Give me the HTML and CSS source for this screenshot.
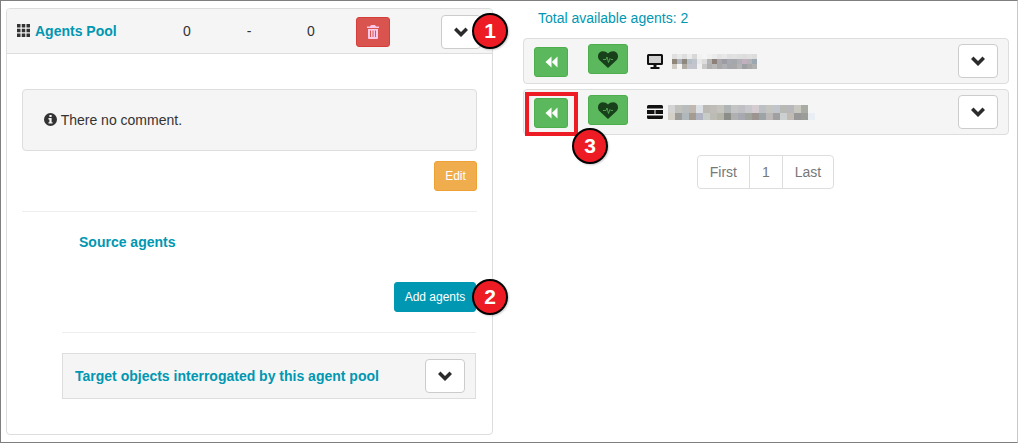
FILE: index.html
```html
<!DOCTYPE html>
<html lang="en">
<head>
    <meta charset="UTF-8">
    <title>Agents Pool</title>
    <link rel="stylesheet" href="styles.css">
</head>
<body>
    <svg class="sprites" width="0" height="0">
        <symbol id="chevron" viewBox="0 0 14 10"><path d="M0 3 2.500.5 7 5l4.500-4.500L14 3 7 10z"/></symbol>
        <symbol id="rewind" viewBox="0 0 13 12"><path d="M6.500 .5v11L.5 6zM12.500 .5v11L6.800 6z"/></symbol>
        <symbol id="heart" viewBox="0 0 20 17">
            <path d="M10 17 1.600 9.200C-.7 7-.4 3.200 1.600 1.400 3.800-.5 7.500-.2 10 2.600 12.500-.2 16.200-.5 18.400 1.400c2 1.800 2.300 5.600 0 7.800z"/>
            <polyline class="pulse" points="5,8.500 8,8.500 9,6 10.500,11.500 12,7.500 13,8.500 15,8.500"/>
        </symbol>
    </svg>

    <div class="frame">
        <div class="left">
            <div class="panel">
                <div class="panel-head">
                    <svg class="grid-icon" width="13" height="13" viewBox="0 0 13 13">
                        <path d="M0 0h3.500v3.500H0zM4.750 0h3.500v3.500h-3.500zM9.500 0H13v3.500H9.500zM0 4.750h3.500v3.500H0zM4.750 4.750h3.500v3.500h-3.500zM9.500 4.750H13v3.500H9.500zM0 9.500h3.500V13H0zM4.750 9.500h3.500V13h-3.500zM9.500 9.500H13V13H9.500z"/>
                    </svg>
                    <span class="title">Agents Pool</span>
                    <span class="num num-a">0</span>
                    <span class="num num-b">-</span>
                    <span class="num num-c">0</span>
                    <button class="btn btn-danger">
                        <svg width="12" height="14" viewBox="0 0 12 14"><path fill-rule="evenodd" d="M4 0h4l1 1.500h3V3H0V1.500h3zM1 4h10v9a1 1 0 0 1-1 1H2a1 1 0 0 1-1-1zM3 5.500V12h1V5.500zM5.500 5.500V12h1V5.500zM8 5.500V12h1V5.500z"/></svg>
                    </button>
                    <button class="btn btn-toggle toggle-head"><svg class="chev"><use href="#chevron"/></svg></button>
                </div>
                <div class="panel-body">
                    <div class="well"><svg class="info" width="13" height="13" viewBox="0 0 14 14"><path fill-rule="evenodd" d="M7 0a7 7 0 1 1 0 14A7 7 0 0 1 7 0zM5.800 2.200v2.200h2.400V2.200zM4.800 5.500v1.400h1v3h-1v1.500h4.400V9.900h-1V5.500z"/></svg> There no comment.</div>
                    <div class="row-end"><button class="btn btn-warning">Edit</button></div>
                    <hr class="rule">
                    <div class="indent">
                        <h4 class="source-title">Source agents</h4>
                        <div class="row-end add-row"><button class="btn btn-info">Add agents</button></div>
                        <hr class="rule rule-two">
                        <div class="target">
                            <span class="target-title">Target objects interrogated by this agent pool</span>
                            <button class="btn btn-toggle"><svg class="chev"><use href="#chevron"/></svg></button>
                        </div>
                    </div>
                </div>
            </div>
        </div>

        <div class="right">
            <div class="total">Total available agents: 2</div>

            <div class="agent">
                <button class="btn btn-success btn-back"><svg width="13" height="12"><use href="#rewind"/></svg></button>
                <button class="btn btn-success btn-health"><svg width="20" height="17"><use href="#heart"/></svg></button>
                <svg class="kind" width="16" height="15" viewBox="0 0 16 15">
                    <path class="screen" d="M1 1h14v9H1z"/>
                    <path fill-rule="evenodd" d="M1.500 0h13A1.500 1.500 0 0 1 16 1.500v8a1.500 1.500 0 0 1-1.500 1.500H9.500v2h3v2h-9v-2h3v-2h-5A1.500 1.500 0 0 1 0 9.500v-8A1.500 1.500 0 0 1 1.500 0zM2 2v7h12V2z"/>
                </svg>
                <!-- blurred host name -->
                <svg class="blur blur-one" width="85" height="15" viewBox="0 0 17 3" shape-rendering="crispEdges">
                    <rect x="0" y="0" width="1" height="1" fill="#e0e0e0"/><rect x="1" y="0" width="1" height="1" fill="#e9e9e9"/><rect x="2" y="0" width="1" height="1" fill="#dedede"/><rect x="3" y="0" width="1" height="1" fill="#ececec"/><rect x="4" y="0" width="1" height="1" fill="#d8d8d8"/><rect x="5" y="0" width="1" height="1" fill="#f2f2f2"/><rect x="7" y="0" width="1" height="1" fill="#f0f0f0"/><rect x="8" y="0" width="1" height="1" fill="#ebebeb"/><rect x="9" y="0" width="1" height="1" fill="#e4e4e4"/><rect x="10" y="0" width="1" height="1" fill="#e8e8e8"/><rect x="11" y="0" width="1" height="1" fill="#e0e0e0"/><rect x="12" y="0" width="1" height="1" fill="#e2e2e2"/><rect x="13" y="0" width="1" height="1" fill="#e0dfe0"/><rect x="14" y="0" width="1" height="1" fill="#dddddd"/><rect x="15" y="0" width="1" height="1" fill="#e0e0e0"/><rect x="16" y="0" width="1" height="1" fill="#dcdcdc"/>
                    <rect x="0" y="1" width="1" height="1" fill="#8f8578"/><rect x="1" y="1" width="1" height="1" fill="#b0b4bc"/><rect x="2" y="1" width="1" height="1" fill="#8c8880"/><rect x="3" y="1" width="1" height="1" fill="#b8bec6"/><rect x="4" y="1" width="1" height="1" fill="#c0c4cc"/><rect x="5" y="1" width="1" height="1" fill="#e8e8e8"/><rect x="6" y="1" width="1" height="1" fill="#dcdcdc"/><rect x="7" y="1" width="1" height="1" fill="#b4b4b4"/><rect x="8" y="1" width="1" height="1" fill="#8c8078"/><rect x="9" y="1" width="1" height="1" fill="#a8a8ac"/><rect x="10" y="1" width="1" height="1" fill="#9c9ca4"/><rect x="11" y="1" width="1" height="1" fill="#a8a8b0"/><rect x="12" y="1" width="1" height="1" fill="#a4a8ac"/><rect x="13" y="1" width="1" height="1" fill="#b0b0b4"/><rect x="14" y="1" width="1" height="1" fill="#c0b0c0"/><rect x="15" y="1" width="1" height="1" fill="#b4b4b8"/><rect x="16" y="1" width="1" height="1" fill="#9ca8b0"/>
                    <rect x="0" y="2" width="1" height="1" fill="#d0ccc4"/><rect x="2" y="2" width="1" height="1" fill="#b0aca4"/><rect x="3" y="2" width="1" height="1" fill="#c4c4cc"/><rect x="4" y="2" width="1" height="1" fill="#c4c4cc"/><rect x="5" y="2" width="1" height="1" fill="#f0f0f0"/><rect x="6" y="2" width="1" height="1" fill="#c8c8c8"/><rect x="7" y="2" width="1" height="1" fill="#b0b0b0"/><rect x="8" y="2" width="1" height="1" fill="#b8b8b8"/><rect x="9" y="2" width="1" height="1" fill="#a8a8a8"/><rect x="10" y="2" width="1" height="1" fill="#b0b0b4"/><rect x="11" y="2" width="1" height="1" fill="#a4a8ac"/><rect x="12" y="2" width="1" height="1" fill="#a8a8a8"/><rect x="13" y="2" width="1" height="1" fill="#b4b4b4"/><rect x="14" y="2" width="1" height="1" fill="#9ca0a4"/><rect x="15" y="2" width="1" height="1" fill="#a8a8a8"/><rect x="16" y="2" width="1" height="1" fill="#b0b0b0"/>
                </svg>
                <button class="btn btn-toggle toggle-end"><svg class="chev"><use href="#chevron"/></svg></button>
            </div>

            <div class="agent">
                <button class="btn btn-success btn-back"><svg width="13" height="12"><use href="#rewind"/></svg></button>
                <button class="btn btn-success btn-health"><svg width="20" height="17"><use href="#heart"/></svg></button>
                <svg class="kind" width="16" height="14" viewBox="0 0 16 14">
                    <path d="M1.500 0h13A1.500 1.500 0 0 1 16 1.500V3.500H0V1.500A1.500 1.500 0 0 1 1.500 0zM0 5h7.500v4H0zM8.500 5H16v4H8.500zM0 10.500h16v2a1.500 1.500 0 0 1-1.500 1.500h-13A1.500 1.500 0 0 1 0 12.500z"/>
                </svg>
                <svg class="blur blur-two" width="147" height="15" viewBox="0 0 21 2" preserveAspectRatio="none" shape-rendering="crispEdges">
                    <rect x="0" y="0" width="1" height="1" fill="#d4d4d4"/><rect x="1" y="0" width="1" height="1" fill="#c0c0bc"/><rect x="2" y="0" width="1" height="1" fill="#b8bcbc"/><rect x="3" y="0" width="1" height="1" fill="#c0b8b0"/><rect x="4" y="0" width="1" height="1" fill="#dce0e4"/><rect x="5" y="0" width="1" height="1" fill="#bcb8b4"/><rect x="6" y="0" width="1" height="1" fill="#c0bcb8"/><rect x="7" y="0" width="1" height="1" fill="#c4c4bc"/><rect x="8" y="0" width="1" height="1" fill="#b0b4b4"/><rect x="9" y="0" width="1" height="1" fill="#c4c4c4"/><rect x="10" y="0" width="1" height="1" fill="#c0c0c4"/><rect x="11" y="0" width="1" height="1" fill="#c8c8cc"/><rect x="12" y="0" width="1" height="1" fill="#d4ccd0"/><rect x="13" y="0" width="1" height="1" fill="#bcc0c4"/><rect x="14" y="0" width="1" height="1" fill="#c4c4c0"/><rect x="15" y="0" width="1" height="1" fill="#c0c4cc"/><rect x="16" y="0" width="1" height="1" fill="#b8b8b4"/><rect x="17" y="0" width="1" height="1" fill="#b8b8bc"/><rect x="18" y="0" width="1" height="1" fill="#c8c8c0"/><rect x="19" y="0" width="1" height="1" fill="#a8aca4"/>
                    <rect x="0" y="1" width="1" height="1" fill="#d4d0c8"/><rect x="1" y="1" width="1" height="1" fill="#9c9c98"/><rect x="2" y="1" width="1" height="1" fill="#b0b8bc"/><rect x="3" y="1" width="1" height="1" fill="#a49c90"/><rect x="4" y="1" width="1" height="1" fill="#b0b4c0"/><rect x="5" y="1" width="1" height="1" fill="#c8ccc8"/><rect x="6" y="1" width="1" height="1" fill="#bcbcb4"/><rect x="7" y="1" width="1" height="1" fill="#b4b4a8"/><rect x="8" y="1" width="1" height="1" fill="#8c8c88"/><rect x="9" y="1" width="1" height="1" fill="#b0b0b0"/><rect x="10" y="1" width="1" height="1" fill="#a8a8b0"/><rect x="11" y="1" width="1" height="1" fill="#a0a49c"/><rect x="12" y="1" width="1" height="1" fill="#9c9490"/><rect x="13" y="1" width="1" height="1" fill="#9ca4a8"/><rect x="14" y="1" width="1" height="1" fill="#bcb8b8"/><rect x="15" y="1" width="1" height="1" fill="#a0a0a0"/><rect x="16" y="1" width="1" height="1" fill="#ccd0d0"/><rect x="17" y="1" width="1" height="1" fill="#c0bcb4"/><rect x="18" y="1" width="1" height="1" fill="#989898"/><rect x="19" y="1" width="1" height="1" fill="#9c9c98"/><rect x="20" y="1" width="1" height="1" fill="#e8eef4"/>
                </svg>
                <button class="btn btn-toggle toggle-end"><svg class="chev"><use href="#chevron"/></svg></button>
            </div>

            <div class="pager">
                <span class="page">First</span><span class="page">1</span><span class="page">Last</span>
            </div>
        </div>

        <div class="mark-box"></div>
        <div class="badge badge-one">1</div>
        <div class="badge badge-two">2</div>
        <div class="badge badge-three">3</div>
    </div>
</body>
</html>
```

FILE: styles.css
```css
* {
    box-sizing: border-box;
}
html, body {
    margin: 0;
    padding: 0;
}
body {
    font-family: "Liberation Sans", Arial, sans-serif;
    font-size: 14px;
    color: #333;
    background-color: #fff;
}
.sprites {
    position: absolute;
}
.frame {
    position: relative;
    display: flex;
    width: 1018px;
    height: 443px;
    border: 1px solid #7f7f7f;
    border-right-color: #c8c8c8;
    overflow: hidden;
}
.left {
    width: 492px;
    padding: 7px 0 0 5px;
}
.right {
    flex: 1;
    padding: 0 8px 0 30px;
}
.btn {
    display: inline-flex;
    align-items: center;
    justify-content: center;
    padding: 0;
    font-family: inherit;
    font-size: 12px;
    color: #fff;
    border: 1px solid transparent;
    border-radius: 3px;
}
.btn-danger {
    position: absolute;
    left: 355px;
    top: 16px;
    width: 34px;
    height: 30px;
    background-color: #d9534f;
    border-color: #d43f3a;
    fill: #fcc8e8;
}
.btn-warning {
    width: 43px;
    height: 30px;
    background-color: #f0ad4e;
    border-color: #eea236;
}
.btn-info {
    width: 82px;
    height: 30px;
    background-color: #0097b2;
    border-color: #0097b2;
}
.btn-success {
    background-color: #5cb85c;
    border-color: #4cae4c;
}
.btn-toggle {
    width: 40px;
    height: 34px;
    background-color: #fff;
    border-color: #ccc;
    border-radius: 4px;
    fill: #2b2b2b;
}
.chev {
    width: 14px;
    height: 10px;
}

/* left panel */
.panel {
    width: 487px;
    height: 427px;
    border: 1px solid #ddd;
    border-radius: 4px;
}
.panel-head {
    display: flex;
    align-items: center;
    height: 45px;
    padding-left: 10px;
    background-color: #f5f5f5;
    border-bottom: 1px solid #ddd;
    border-radius: 3px 3px 0 0;
}
.grid-icon {
    fill: #333;
    margin-right: 5px;
    margin-top: -1px;
}
.title, .source-title, .target-title {
    font-size: 14px;
    font-weight: bold;
    color: #0097b2;
}
.title {
    width: 142px;
}
.num {
    text-align: center;
}
.num-a {
    width: 20px;
}
.num-b {
    width: 20px;
    margin-left: 42px;
}
.num-c {
    width: 20px;
    margin-left: 42px;
}
.toggle-head {
    position: absolute;
    left: 440px;
    top: 14px;
}
.panel-body {
    padding: 35px 15px 0;
}
.well {
    height: 62px;
    padding: 22px 21px 0;
    background-color: #f5f5f5;
    border: 1px solid #ddd;
    border-radius: 4px;
}
.info {
    fill: #333;
    vertical-align: -1px;
}
.row-end {
    display: flex;
    justify-content: flex-end;
    margin-top: 10px;
}
.rule {
    margin: 20px 0 0;
    border: 0;
    border-top: 1px solid #eee;
}
.indent {
    padding-left: 40px;
    margin-right: 1px;
}
.source-title {
    margin: 0;
    padding: 22px 0 0 17px;
}
.add-row {
    margin-top: 32px;
}
.rule-two {
    margin-top: 20px;
}
.target {
    display: flex;
    align-items: center;
    justify-content: space-between;
    height: 46px;
    margin-top: 20px;
    padding: 0 10px 0 12px;
    background-color: #f5f5f5;
    border: 1px solid #ddd;
}

/* right column */
.total {
    padding: 9px 0 0 15px;
    height: 37px;
    color: #0097b2;
}
.agent {
    display: flex;
    align-items: center;
    height: 46px;
    margin-bottom: 5px;
    padding: 0 10px;
    background-color: #f5f5f5;
    border: 1px solid #ddd;
    border-radius: 4px;
}
.btn-back {
    width: 34px;
    height: 30px;
    margin-top: 2px;
    fill: #fff;
}
.btn-health {
    width: 40px;
    height: 30px;
    margin: 0 0 4px 20px;
    fill: #17401b;
}
.pulse {
    fill: none;
    stroke: #5cb85c;
    stroke-width: 0.8;
}
.kind {
    margin-left: 19px;
    fill: #111;
}
.screen {
    fill: #d0d0d0;
}
.blur {
    margin-left: 9px;
}
.blur-two {
    margin-left: 5px;
}
.toggle-end {
    margin-left: auto;
}
.pager {
    display: flex;
    justify-content: center;
    margin-top: 20px;
}
.page {
    height: 34px;
    padding: 8px 12px 0;
    color: #777;
    border: 1px solid #ddd;
    margin-left: -1px;
}
.page:first-child {
    border-radius: 4px 0 0 4px;
}
.page:last-child {
    border-radius: 0 4px 4px 0;
}

/* annotations on top of the screenshot */
.mark-box {
    position: absolute;
    left: 524px;
    top: 91px;
    width: 53px;
    height: 44px;
    border: 4px solid #ed1c24;
}
.badge {
    position: absolute;
    width: 36px;
    height: 36px;
    font-size: 21px;
    font-weight: bold;
    line-height: 32px;
    text-align: center;
    color: #fff;
    background-color: #ed1c24;
    border: 2px solid #000;
    border-radius: 50%;
    box-shadow: 1px 1px 2px rgba(0, 0, 0, 0.2);
}
.badge-one {
    left: 471px;
    top: 12px;
}
.badge-two {
    left: 471px;
    top: 278px;
}
.badge-three {
    left: 571px;
    top: 127px;
}
```
